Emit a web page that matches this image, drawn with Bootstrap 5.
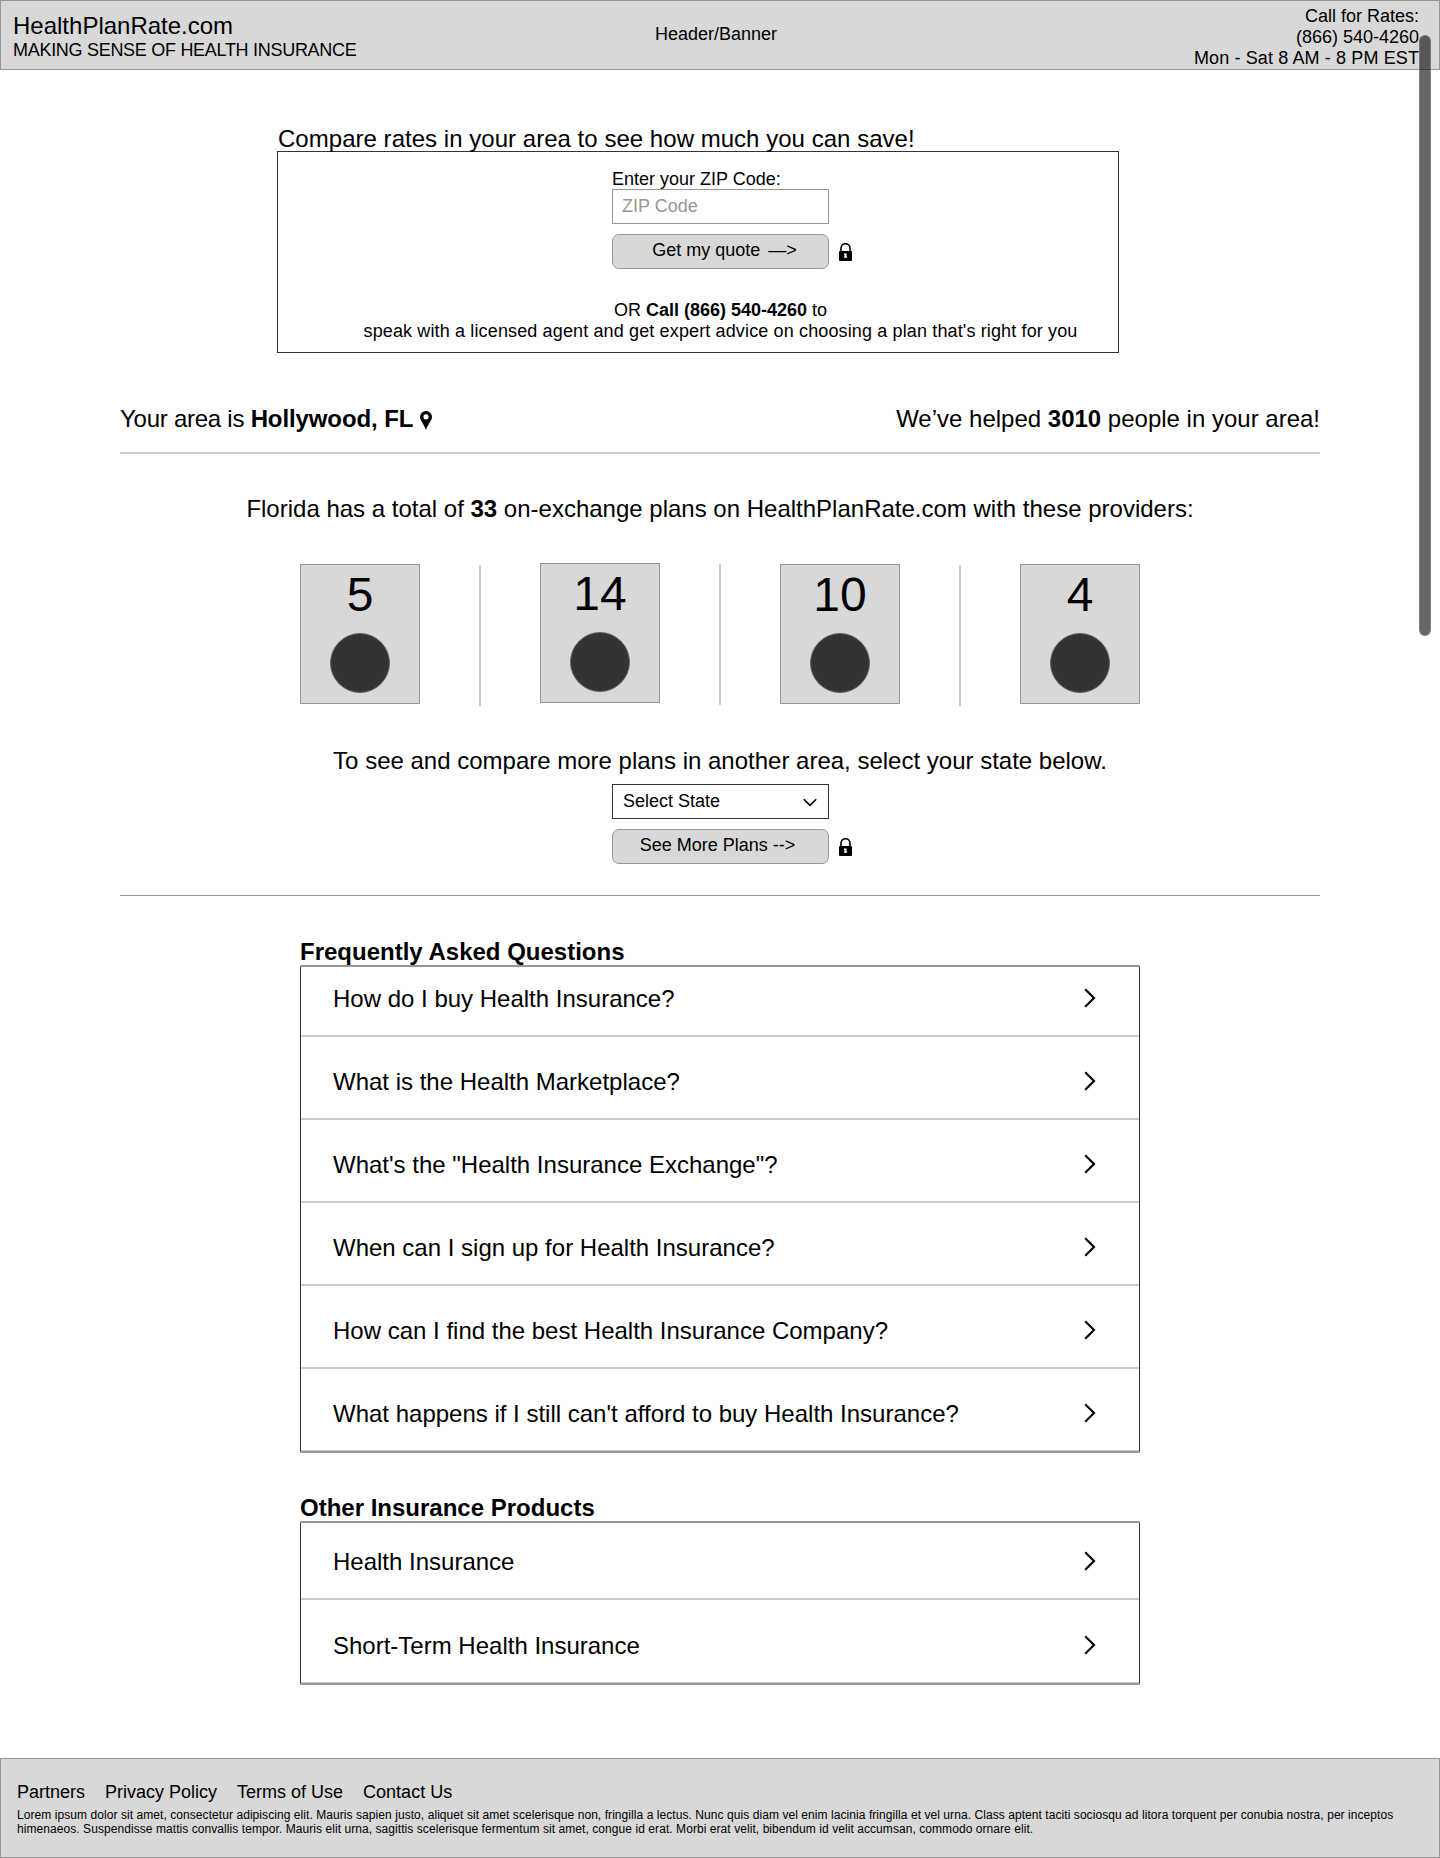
<!DOCTYPE html>
<html lang="en">
<head>
<meta charset="utf-8">
<meta name="viewport" content="width=device-width, initial-scale=1">
<title>HealthPlanRate.com</title>
<link href="https://cdn.jsdelivr.net/npm/bootstrap@5.3.0/dist/css/bootstrap.min.css" rel="stylesheet">
<style>
body{font-family:"Liberation Sans",Arial,sans-serif;font-size:18px;line-height:21px;color:#000;background:#fff;width:1440px;height:1858px;overflow:hidden}
.t24{font-size:24px;line-height:28px;font-weight:400;margin:0;white-space:nowrap}
h2.t24{font-weight:700}
.gray-bar{background:#d8d8d8;border:1px solid #979797}
.site-head{height:70px}
.site-head>div{flex:1 1 0}
.brand-block{padding:11px 0 0 12px}
.tagline{letter-spacing:-.29px}
.banner-label{padding-top:23px}
.phone-block{padding:5px 20px 0 0}
.hours{letter-spacing:.12px}
.quote-wrap{width:842px;margin:55px 0 0 277px}
.quote-wrap .t24{margin-bottom:-2px;position:relative;z-index:1;padding-left:1px;letter-spacing:.03px}
.quote-box{height:202px;border:1px solid #333;padding-top:17px;padding-left:44px}
.field-wrap{width:217px}
.quote-box .field-wrap{margin-left:290px}
.quote-box label{margin-bottom:-1px}
.f-ctl{height:35px;border:1px solid #979797;border-radius:0;padding:0 9px 1px;font-size:18px;line-height:21px;background:#fff;color:#000}
.f-ctl::placeholder{color:#979797;opacity:1}
.f-btn{height:35px;width:217px;flex:none;background:#d8d8d8;border:1px solid #979797;border-radius:7px;font-size:18px;line-height:21px;color:#000;padding:5px 0 7px;white-space:pre}
.arrow-dash{margin-left:3px}
.btn-line{margin-top:10px;width:250px}
.lock-ic{margin:1px 0 0 10px;flex:none}
.agent-copy{margin-top:31px;width:797px;text-align:center;white-space:nowrap}
.agent-line{letter-spacing:.136px}
.wide{width:1200px;margin-left:auto;margin-right:auto}
.area-line{margin-top:52px;height:47px}
.area-lead{letter-spacing:-.25px}
.area-city{letter-spacing:-.1px}
.pin-ic{margin:6px 0 0 7px}
.rule-a{height:2px;background:#ccc}
.rule-b{height:1px;background:#979797;margin-top:31px}
.total-line{margin-top:41px}
.state-line{margin-top:42px}
.plans{width:840px;height:142px;margin:40px auto 0}
.plan-tile{width:120px;height:140px;background:#d8d8d8;border:1px solid #979797;flex:none;margin-top:1px}
.plan-tile.up{margin-top:0}
.plan-tile b{font-weight:400;font-size:48px;line-height:56px;padding-top:2px}
.dot-c{width:60px;height:60px;border-radius:50%;background:#333;border:1px solid #666;margin-top:10px}
.v-line{width:2px;height:141px;background:#ccc;margin:2px 59px 0;flex:none}
.v-line.up{margin-top:1px}
.state-wrap{width:217px;margin:9px 0 0 612px}
.state-sel{border-color:#333;padding-left:10px;padding-right:11px}
.state-sel svg{margin-top:3px}
.state-wrap .f-btn{padding-right:6px}
.topic-sec{width:840px;margin:42px auto 0}
.topic-sec h2{margin-bottom:-1px;position:relative;z-index:1}
.topic-box{border:solid #333;border-width:0 1px;position:relative}
.topic-box::before,.topic-box::after{content:"";display:block;height:2px;margin:0 -1px;background:#979797}
.topic-box::after{margin-top:-1px;position:relative}
.topic-row{height:83px;padding:0 43px 0 32px;border-bottom:2px solid #ccc;color:#000;text-decoration:none}
.topic-row .t24{padding-top:31px}
.topic-row svg{margin-top:34px;flex:none}
.topic-row.first{height:70px}.topic-row.first .t24{padding-top:18px}.topic-row.first svg{margin-top:21px}
.prod{margin-top:41px}
.prod .first{height:77px}.prod .first .t24{padding-top:25px}.prod .first svg{margin-top:28px}
.prod .topic-row:last-child{height:84px}
.prod .topic-row:last-child .t24{padding-top:32px}
.prod .topic-row:last-child svg{margin-top:35px}
.site-foot{height:100px;margin-top:73px;padding:23px 16px 0}
.foot-nav{gap:20px}
.foot-nav a{color:#000;text-decoration:none}
.fine{font-size:12px;line-height:14px;margin:5px 0 0;white-space:nowrap;letter-spacing:.066px}
.scroll-thumb{position:absolute;left:1419px;top:35px;width:12px;height:601px;border-radius:6px;background:rgba(0,0,0,.6);border:1px solid rgba(151,151,151,.5)}
</style>
</head>
<body class="position-relative">
<svg width="0" height="0" class="position-absolute">
<symbol id="lock" viewBox="0 0 13 18"><path d="M2 9V5.200a4.500 4.500 0 0 1 9 0V9" fill="none" stroke="#000" stroke-width="1.600"/><rect y="8" width="13" height="10" rx="1"/><path d="M5 10.500h2.600v3H8v1.300H5v-1.300h.6v-1.400H5z" fill="#fff"/></symbol>
<symbol id="chev" viewBox="0 0 12 20"><path d="M1.200 1.200 10 10l-8.800 8.800" fill="none" stroke="#000" stroke-width="2.200"/></symbol>
</svg>
<header class="site-head gray-bar d-flex">
  <div class="brand-block"><div class="t24">HealthPlanRate.com</div><div class="tagline">MAKING SENSE OF HEALTH INSURANCE</div></div>
  <div class="banner-label text-center">Header/Banner</div>
  <div class="phone-block text-end">Call for Rates:<br>(866) 540-4260<br><span class="hours">Mon - Sat 8 AM - 8 PM EST</span></div>
</header>
<main>
  <section class="quote-wrap">
    <h1 class="t24">Compare rates in your area to see how much you can save!</h1>
    <form class="quote-box">
      <div class="field-wrap">
        <label for="zip" class="d-block">Enter your ZIP Code:</label>
        <input id="zip" class="form-control f-ctl" placeholder="ZIP Code">
        <div class="btn-line d-flex align-items-center"><button type="button" class="btn f-btn ps-2">Get my quote <span class="arrow-dash">—&gt;</span></button><svg class="lock-ic" width="13" height="18"><use href="#lock"/></svg></div>
      </div>
      <div class="agent-copy">OR <strong>Call (866) 540-4260</strong> to<br><span class="agent-line">speak with a licensed agent and get expert advice on choosing a plan that's right for you</span></div>
    </form>
  </section>
  <div class="wide area-line d-flex justify-content-between">
    <div class="t24 d-flex"><span class="area-lead">Your area is&nbsp;</span><strong class="area-city">Hollywood, FL</strong><svg class="pin-ic" width="12" height="19" viewBox="0 0 12 19"><path fill-rule="evenodd" d="M6 0a6 6 0 0 0-6 6c0 3.500 4 7 6 13 2-6 6-9.500 6-13a6 6 0 0 0-6-6zm0 3.200a2.600 2.600 0 1 1 0 5.200 2.600 2.600 0 0 1 0-5.200z"/></svg></div>
    <div class="t24">We’ve helped <strong>3010</strong> people in your area!</div>
  </div>
  <div class="wide rule-a"></div>
  <p class="t24 text-center total-line">Florida has a total of <strong>33</strong> on-exchange plans on HealthPlanRate.com with these providers:</p>
  <div class="plans d-flex">
    <div class="plan-tile d-flex flex-column align-items-center"><b>5</b><span class="dot-c"></span></div><i class="v-line"></i>
    <div class="plan-tile up d-flex flex-column align-items-center"><b>14</b><span class="dot-c"></span></div><i class="v-line up"></i>
    <div class="plan-tile d-flex flex-column align-items-center"><b>10</b><span class="dot-c"></span></div><i class="v-line"></i>
    <div class="plan-tile d-flex flex-column align-items-center"><b>4</b><span class="dot-c"></span></div>
  </div>
  <p class="t24 text-center state-line">To see and compare more plans in another area, select your state below.</p>
  <div class="state-wrap">
    <div class="f-ctl state-sel d-flex align-items-center justify-content-between" role="button"><span>Select State</span><svg width="14" height="9" viewBox="0 0 14 9"><path d="M.8 1.200 7 7.400l6.200-6.200" fill="none" stroke="#000" stroke-width="1.600"/></svg></div>
    <div class="btn-line d-flex align-items-center"><button type="button" class="btn f-btn">See More Plans --&gt;</button><svg class="lock-ic mt-0" width="13" height="18"><use href="#lock"/></svg></div>
  </div>
  <div class="wide rule-b"></div>
  <section class="topic-sec">
    <h2 class="t24">Frequently Asked Questions</h2>
    <div class="topic-box">
      <a class="topic-row first d-flex justify-content-between"><span class="t24">How do I buy Health Insurance?</span><svg width="12" height="20"><use href="#chev"/></svg></a>
      <a class="topic-row d-flex justify-content-between"><span class="t24">What is the Health Marketplace?</span><svg width="12" height="20"><use href="#chev"/></svg></a>
      <a class="topic-row d-flex justify-content-between"><span class="t24">What's the "Health Insurance Exchange"?</span><svg width="12" height="20"><use href="#chev"/></svg></a>
      <a class="topic-row d-flex justify-content-between"><span class="t24">When can I sign up for Health Insurance?</span><svg width="12" height="20"><use href="#chev"/></svg></a>
      <a class="topic-row d-flex justify-content-between"><span class="t24">How can I find the best Health Insurance Company?</span><svg width="12" height="20"><use href="#chev"/></svg></a>
      <a class="topic-row d-flex justify-content-between"><span class="t24">What happens if I still can't afford to buy Health Insurance?</span><svg width="12" height="20"><use href="#chev"/></svg></a>
    </div>
  </section>
  <section class="topic-sec prod">
    <h2 class="t24">Other Insurance Products</h2>
    <div class="topic-box">
      <a class="topic-row first d-flex justify-content-between"><span class="t24">Health Insurance</span><svg width="12" height="20"><use href="#chev"/></svg></a>
      <a class="topic-row d-flex justify-content-between"><span class="t24">Short-Term Health Insurance</span><svg width="12" height="20"><use href="#chev"/></svg></a>
    </div>
  </section>
</main>
<footer class="site-foot gray-bar">
  <nav class="foot-nav d-flex"><a>Partners</a><a>Privacy Policy</a><a>Terms of Use</a><a>Contact Us</a></nav>
  <p class="fine">Lorem ipsum dolor sit amet, consectetur adipiscing elit. Mauris sapien justo, aliquet sit amet scelerisque non, fringilla a lectus. Nunc quis diam vel enim lacinia fringilla et vel urna. Class aptent taciti sociosqu ad litora torquent per conubia nostra, per inceptos<br>himenaeos. Suspendisse mattis convallis tempor. Mauris elit urna, sagittis scelerisque fermentum sit amet, congue id erat. Morbi erat velit, bibendum id velit accumsan, commodo ornare elit.</p>
</footer>
<div class="scroll-thumb"></div>
<script src="https://cdn.jsdelivr.net/npm/bootstrap@5.3.0/dist/js/bootstrap.bundle.min.js"></script>
</body>
</html>
